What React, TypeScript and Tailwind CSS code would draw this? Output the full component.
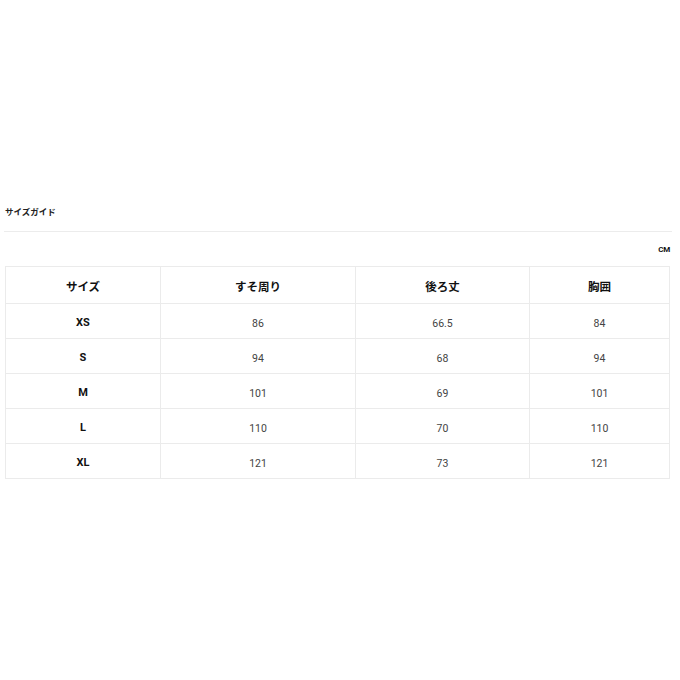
const rows = [
  { size: "XS", hem: "86", back: "66.5", chest: "84" },
  { size: "S", hem: "94", back: "68", chest: "94" },
  { size: "M", hem: "101", back: "69", chest: "101" },
  { size: "L", hem: "110", back: "70", chest: "110" },
  { size: "XL", hem: "121", back: "73", chest: "121" },
];

const font = { fontFamily: 'Roboto, "Noto Sans CJK JP", sans-serif' };

export default function App() {
  return (
    <div className="w-[680px] h-[680px] bg-white text-[#222]" style={font}>
      <div className="pl-[5px] pr-[10px] pt-[205px]">
        <div className="h-[14px] text-[8.5px] font-bold leading-[14px] text-[#222]">サイズガイド</div>
        <div className="mt-[12px] -ml-[1px] -mr-[2px] h-px bg-[#ececec]" />
        <div className="mt-[13px] flex justify-end text-[8px] font-bold leading-[10px] tracking-tight text-[#111]">
          CM
        </div>
        <div className="mt-[11px] border-l border-t border-[#ebebeb]">
          <div className="grid grid-cols-[155px_195px_174px_1fr]">
            {["サイズ", "すそ周り", "後ろ丈", "胸囲"].map((h) => (
              <div
                key={h}
                className="flex h-[37px] items-center justify-center border-b border-r border-[#ebebeb] pt-[5px] text-[11.5px] font-bold text-[#111]"
              >
                {h}
              </div>
            ))}
            {rows.map((r) => (
              <div key={r.size} className="contents">
                <div className="flex h-[35px] items-center justify-center border-b border-r border-[#ebebeb] pt-[5px] text-[11px] font-bold text-[#111]">
                  {r.size}
                </div>
                {[r.hem, r.back, r.chest].map((v, i) => (
                  <div
                    key={i}
                    className="flex h-[35px] items-center justify-center border-b border-r border-[#ebebeb] pt-[5px] text-[10.5px] text-[#444]"
                  >
                    {v}
                  </div>
                ))}
              </div>
            ))}
          </div>
        </div>
      </div>
    </div>
  );
}
